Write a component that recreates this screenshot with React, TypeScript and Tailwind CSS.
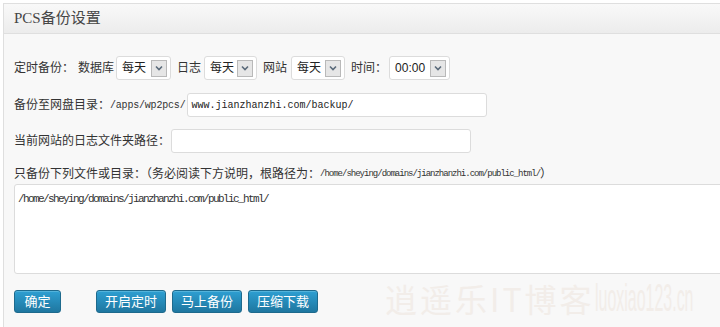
import React from "react";

const cjk = "font-['Liberation_Sans','Noto_Sans_CJK_SC',sans-serif]";
const mono = "font-['Liberation_Mono','Noto_Sans_CJK_SC',monospace]";

function FauxSelect({ value, width }: { value: string; width: string }) {
  return (
    <div className={`flex h-[24px] ${width} items-center justify-between rounded-[3px] border border-[#dcdcdc] bg-white pl-[5px] pr-[3px]`}>
      <span className="text-[12px] text-[#222]">{value}</span>
      <span className="flex h-[17px] w-[16px] items-center justify-center border border-[#b9b9b9] bg-[#e6e6e6]">
        <svg width="8" height="6" viewBox="0 0 8 6">
          <path d="M1 1.5 L4 4.5 L7 1.5" fill="none" stroke="#5a6a7a" strokeWidth="1.6" />
        </svg>
      </span>
    </div>
  );
}

function Bouton({ label, width }: { label: string; width: string }) {
  return (
    <button className={`h-[23px] ${width} rounded-[3px] border border-[#1e6a8d] bg-gradient-to-b from-[#2e9fd2] to-[#1f77a0] text-[13px] text-white shadow-[inset_0_1px_0_rgba(120,200,230,0.5)]`}>
      {label}
    </button>
  );
}

export default function App() {
  return (
    <div className={`relative h-[327px] w-[720px] overflow-hidden bg-white pl-[3px] pt-[3px] ${cjk} text-[#333]`}>
      <div className="h-[330px] w-[740px] border border-[#dfdfdf] bg-[#f8f8f8]">
        {/* entête */}
        <div className="flex h-[30px] items-center border-b border-[#dfdfdf] bg-gradient-to-b from-[#f9f9f9] to-[#ececec] pl-[10px]">
          <span className="font-['Liberation_Serif','Noto_Sans_CJK_SC',serif] text-[15px] text-[#464646]">PCS备份设置</span>
        </div>

        <div className="px-[10px] pt-[22px] text-[12px]">
          {/* ligne 1 */}
          <div className="flex h-[24px] items-center">
            <span>定时备份：</span>
            <span className="ml-[4px] mr-[2px]">数据库</span>
            <FauxSelect value="每天" width="w-[55px]" />
            <span className="ml-[6px] mr-[3px]">日志</span>
            <FauxSelect value="每天" width="w-[53px]" />
            <span className="ml-[6px] mr-[4px]">网站</span>
            <FauxSelect value="每天" width="w-[54px]" />
            <span className="ml-[6px] mr-[2px]">时间：</span>
            <FauxSelect value="00:00" width="w-[61px]" />
          </div>

          {/* ligne 2 */}
          <div className="mt-[13px] flex h-[24px] items-center">
            <span>备份至网盘目录：</span>
            <span className={`${mono} text-[10px] tracking-[-0.2px]`}>/apps/wp2pcs/</span>
            <div className="ml-[2px] flex h-[24px] w-[300px] items-center rounded-[3px] border border-[#dcdcdc] bg-white pl-[3px]">
              <span className={`${mono} text-[10px] text-[#222]`}>www.jianzhanzhi.com/backup/</span>
            </div>
          </div>

          {/* ligne 3 */}
          <div className="mt-[12px] flex h-[24px] items-center">
            <span>当前网站的日志文件夹路径：</span>
            <div className="ml-[1px] h-[24px] w-[300px] rounded-[3px] border border-[#dcdcdc] bg-white" />
          </div>

          {/* ligne 4 */}
          <div className="mt-[13px] flex items-center leading-[16px]">
            <span>只备份下列文件或目录：（务必阅读下方说明，根路径为：</span>
            <span className={`${mono} text-[9px] tracking-[-1px]`}>/home/sheying/domains/jianzhanzhi.com/public_html/</span>
            <span>）</span>
          </div>
          <div className="mt-[2px] h-[90px] w-[720px] rounded-[3px] border border-[#dcdcdc] bg-white px-[3px] pt-[4px]">
            <span className={`${mono} text-[11px] tracking-[-1.6px] text-[#333]`}>/home/sheying/domains/jianzhanzhi.com/public_html/</span>
          </div>

          {/* boutons */}
          <div className="mt-[16px] flex items-center">
            <Bouton label="确定" width="w-[47px]" />
            <div className="ml-[35px] flex gap-[6px]">
              <Bouton label="开启定时" width="w-[70px]" />
              <Bouton label="马上备份" width="w-[70px]" />
              <Bouton label="压缩下载" width="w-[70px]" />
            </div>
          </div>
        </div>
      </div>

      {/* filigrane */}
      <div className="absolute left-[385px] top-[276px] flex h-[44px] items-center whitespace-nowrap text-[#f2ede9]">
        <span className="font-['Noto_Sans_CJK_SC',sans-serif] text-[32px] leading-[44px] tracking-[3px]">逍遥乐IT博客</span>
        <span className="inline-block w-[120px] overflow-visible">
          <span className="inline-block origin-left scale-x-[0.42] scale-y-[1] font-['Liberation_Sans',sans-serif] text-[38px] leading-[44px]">luoxiao123.cn</span>
        </span>
      </div>
    </div>
  );
}
